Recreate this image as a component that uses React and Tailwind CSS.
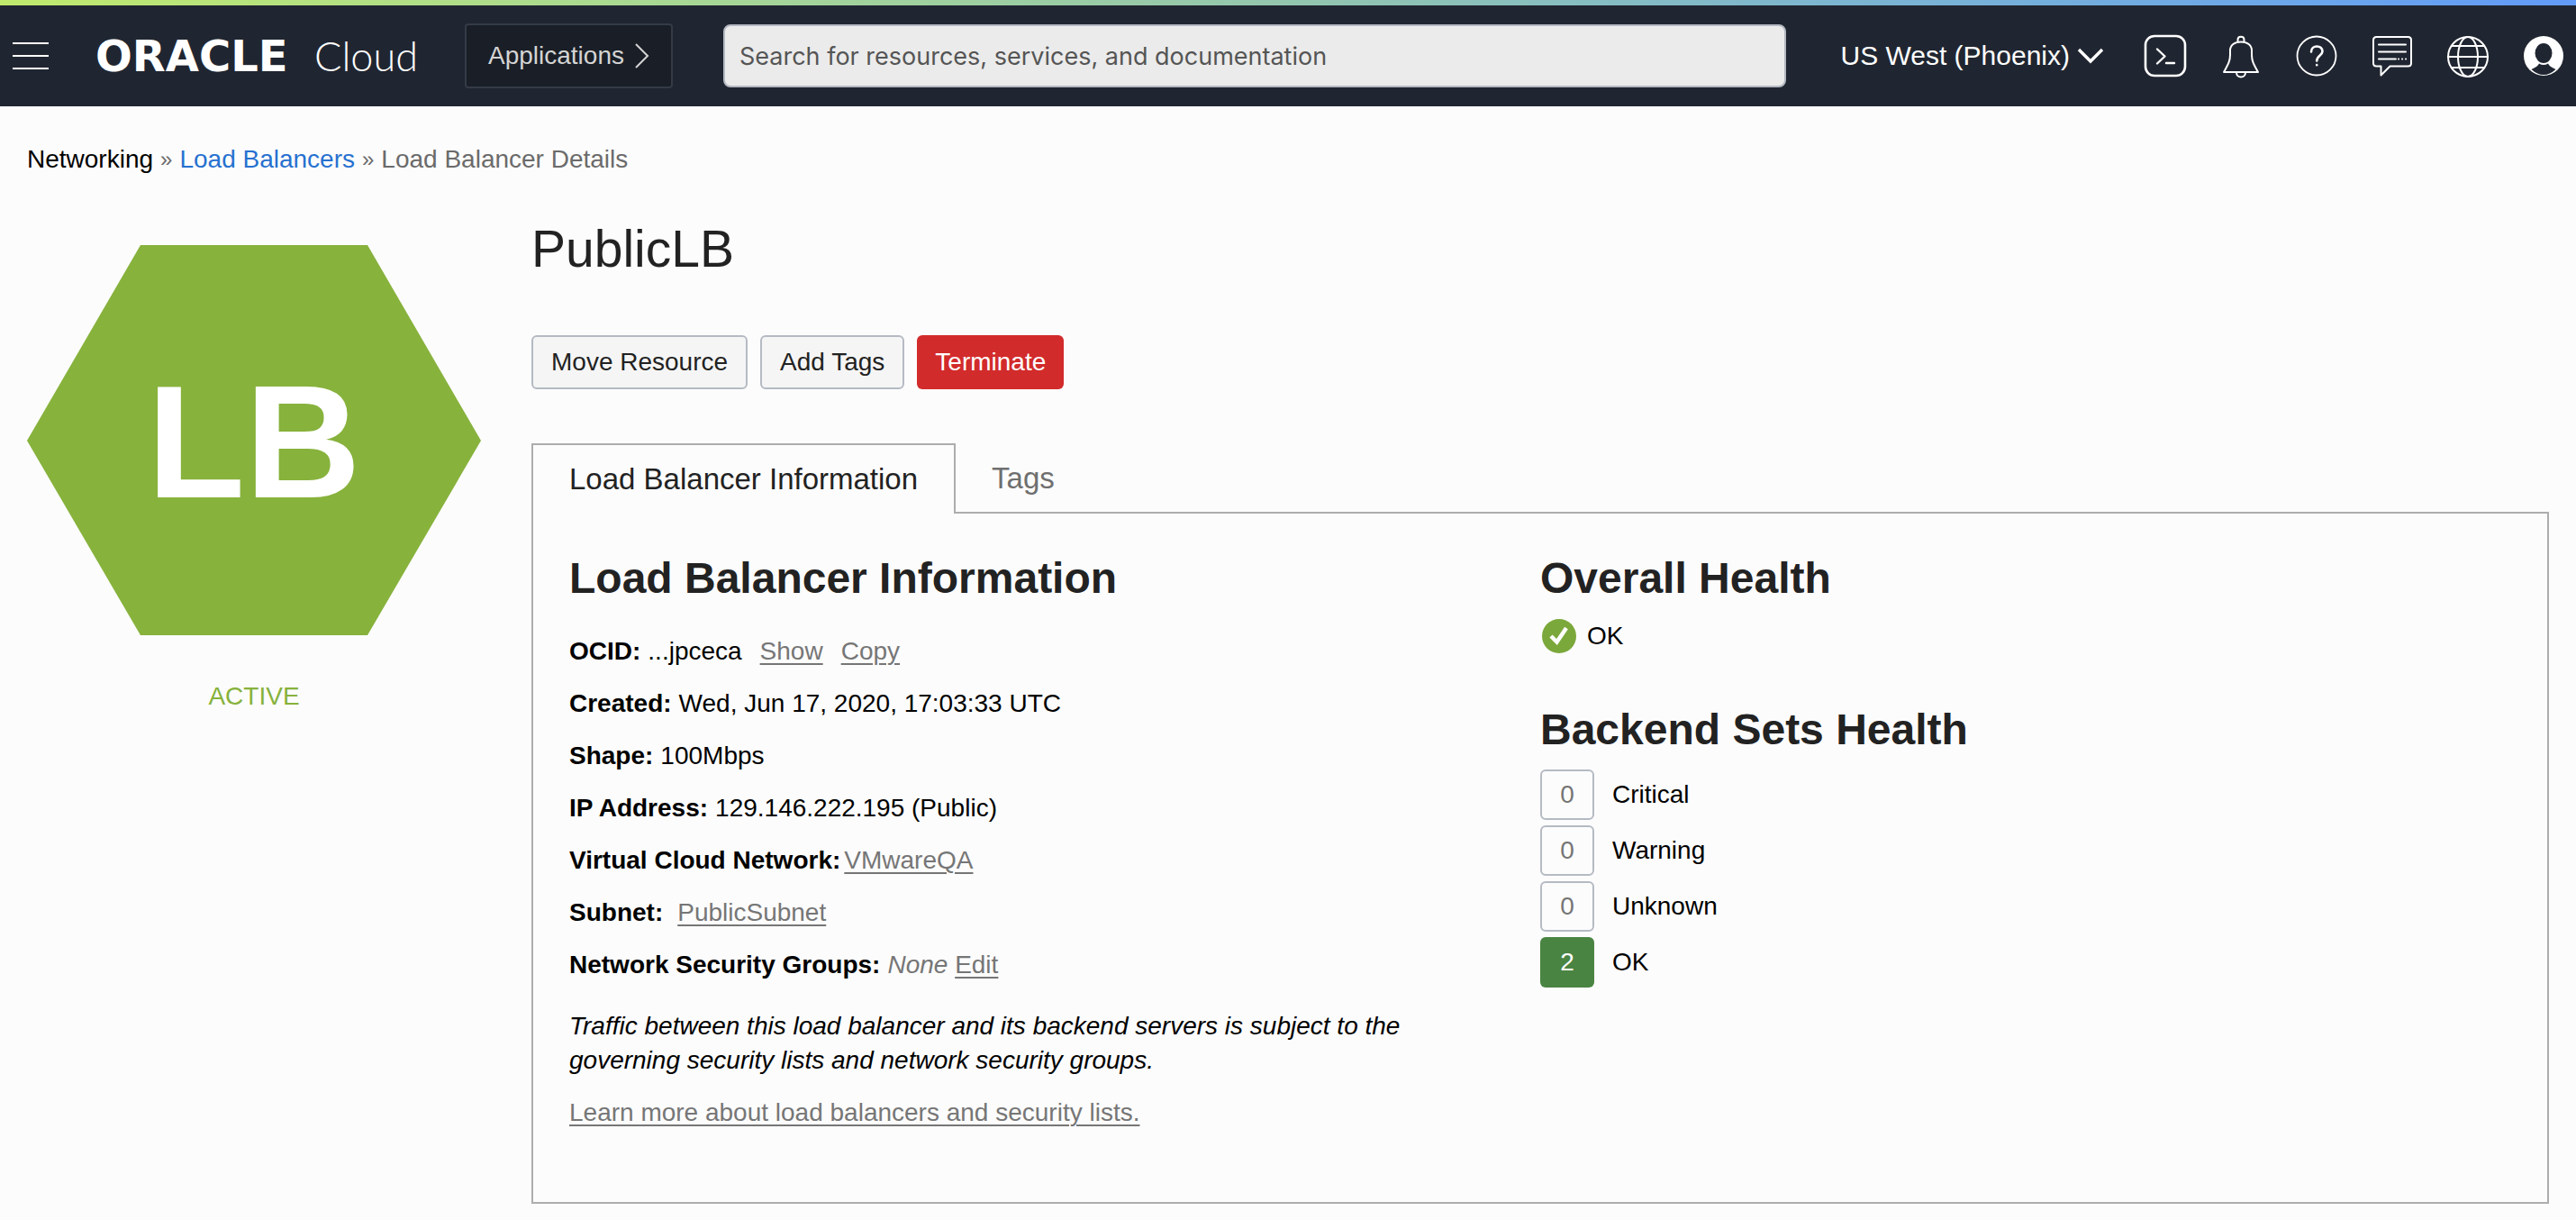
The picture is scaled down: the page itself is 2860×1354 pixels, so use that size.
const FONT = "font-['Liberation_Sans',Arial,sans-serif]";

function IconButton({ label, children }) {
  return (
    <button type="button" aria-label={label} className="flex h-12 w-12 items-center justify-center">
      <svg viewBox="0 0 48 48" className="h-12 w-12 overflow-visible" fill="none" stroke="#fff" strokeWidth="2" strokeLinecap="round" strokeLinejoin="round">
        {children}
      </svg>
    </button>
  );
}

function Header() {
  return (
    <header className="bg-[#202631]">
      <div className="h-1.5 bg-linear-to-r from-[#c0ea6c] via-[#93c6ae] to-[#629bf8]" />
      <div className="flex h-28 items-center pr-3 pl-3.5">
        <button type="button" aria-label="Menu" className="flex w-10 shrink-0 flex-col gap-3">
          <span className="h-0.5 bg-white" />
          <span className="h-0.5 bg-white" />
          <span className="h-0.5 bg-white" />
        </button>
        <a href="#home" className="ml-13 flex w-[358px] shrink-0 items-baseline justify-between text-white">
          <span className="font-['DejaVu_Sans',sans-serif] text-[48px] leading-none font-bold">ORACLE</span>
          <span className="font-[Lato,sans-serif] text-[45px] leading-none font-light">Cloud</span>
        </a>
        <button type="button" className="ml-13 flex h-18 shrink-0 items-center gap-3 rounded border-2 border-[#343b46] bg-[#1a1f27] px-6 text-[28px] text-[#d4d4d4]">
          Applications
          <svg viewBox="0 0 16 28" className="h-7 w-4" fill="none" stroke="#d4d4d4" strokeWidth="2">
            <path d="M1 1L14 14L1 27" />
          </svg>
        </button>
        <input
          type="text"
          aria-label="Search"
          placeholder="Search for resources, services, and documentation"
          className="ml-14 h-[70px] w-0 min-w-0 grow rounded-lg border-2 border-[#b4b9c2] bg-[#ebebeb] px-4 font-[Inter,sans-serif] text-[27px] placeholder:text-[#555]"
        />
        <button type="button" className="ml-15 flex shrink-0 items-center gap-2 text-[30px] text-white">
          US West (Phoenix)
          <svg viewBox="0 0 30 18" className="h-[18px] w-[30px]" fill="none" stroke="#fff" strokeWidth="3.4">
            <path d="M2 2L15 15L28 2" />
          </svg>
        </button>
        <nav aria-label="Tools" className="ml-11 flex shrink-0 gap-9">
          <IconButton label="Cloud Shell">
            <rect x="2" y="2" width="44" height="44" rx="10" strokeWidth="2.6" />
            <path d="M15 16.5L23.5 24.5L15 32.5M25 32H34" strokeWidth="2.4" />
          </IconButton>
          <IconButton label="Announcements">
            <path d="M5 42H43C38.500 34 36 30 36 23V18C36 12 31 8.500 24 8.500C17 8.500 12 12 12 18V23C12 30 9.500 34 5 42ZM20.500 9V6C20.500 1.500 27.500 1.500 27.500 6V9M19 42.500C19 49 29 49 29 42.500" />
          </IconButton>
          <IconButton label="Help">
            <circle cx="24" cy="24" r="21.500" strokeWidth="1.8" />
            <path d="M18 19.500C18 11.500 30.500 11.500 30.500 19C30.500 23.500 24.200 23.500 24.200 29.500M24.200 34V34.300" strokeWidth="2.600" />
          </IconButton>
          <IconButton label="Feedback">
            <path d="M6.500 3H41.500Q45 3 45 6.500V32Q45 35.500 41.500 35.500H21.500L11.500 45.500V35.500H6.500Q3 35.500 3 32V6.500Q3 3 6.500 3ZM9 11.500H39M9 19.500H39M9 27.500H28M31 27.500H31.100M35 27.500H35.100M39 27.500H39.100" />
          </IconButton>
          <IconButton label="Language">
            <circle cx="24" cy="25" r="22" />
            <ellipse cx="24" cy="25" rx="11" ry="22" />
            <path d="M24 3V3.100M2 25H46M6 13H42M6 37H42" />
          </IconButton>
          <IconButton label="Profile">
            <circle cx="24" cy="24" r="22" fill="#fff" stroke="none" />
            <ellipse cx="24" cy="21" rx="9.500" ry="11" fill="#202631" stroke="none" />
            <path d="M19 32.500Q24 35.500 29 32.500Q30 35.500 37.500 39Q31 45 24 45Q17 45 10.500 39Q18 35.500 19 32.500Z" fill="#202631" stroke="none" />
          </IconButton>
        </nav>
      </div>
    </header>
  );
}

const LINK = "text-[#767676] underline decoration-2 underline-offset-4";

function Field({ label, gap = "gap-2", children }) {
  return (
    <div className={`flex items-baseline ${gap}`}>
      <dt className="font-bold">{label}</dt>
      <dd>{children}</dd>
    </div>
  );
}

const BACKENDS = [
  { count: 0, label: "Critical" },
  { count: 0, label: "Warning" },
  { count: 0, label: "Unknown" },
  { count: 2, label: "OK" },
];

export default function App() {
  return (
    <div className={`${FONT} min-h-screen bg-[#fcfcfc] text-[28px] leading-[38px] text-black`}>
      <Header />
      <nav aria-label="Breadcrumb" className="flex gap-2 px-[30px] pt-10 text-[#6b6b6b]">
        <span className="text-black">Networking</span>
        <span className="text-[24px]">»</span>
        <a href="#load-balancers" className="text-[#2771d0]">Load Balancers</a>
        <span className="text-[24px]">»</span>
        <span>Load Balancer Details</span>
      </nav>
      <main className="flex gap-14 px-[30px] pt-12 pb-5">
        <aside className="flex w-[504px] shrink-0 flex-col items-center pt-7">
          <svg viewBox="0 0 504 434" className="w-full" role="img" aria-label="LB">
            <path d="M126 0H378L504 217L378 433H126L0 217Z" fill="#87b23c" />
            <text x="252" y="280" textAnchor="middle" fill="#fff" fontSize="178" fontWeight="bold">LB</text>
          </svg>
          <p className="mt-12 text-[#87b23c]">ACTIVE</p>
        </aside>
        <section className="min-w-0 grow">
          <h1 className="text-[57px] leading-16 text-[#222]">PublicLB</h1>
          <div className="mt-16 flex gap-3.5 text-[#222]">
            <button type="button" className="h-15 rounded-md border-2 border-[#b5bac3] bg-[#f5f5f5] px-5">Move Resource</button>
            <button type="button" className="h-15 rounded-md border-2 border-[#b5bac3] bg-[#f5f5f5] px-5">Add Tags</button>
            <button type="button" className="h-15 rounded-md bg-[#d22b2b] px-5 text-white">Terminate</button>
          </div>
          <div role="tablist" className="relative mt-15 -mb-0.5 flex h-[78px] text-[33px]">
            <button type="button" role="tab" aria-selected="true" className="border-2 border-b-0 border-[#adadad] bg-[#fcfcfc] px-10 text-[#222]">Load Balancer Information</button>
            <button type="button" role="tab" aria-selected="false" className="px-10 text-[#6f6f6f]">Tags</button>
          </div>
          <div role="tabpanel" className="grid grid-cols-[1078px_1fr] border-2 border-[#adadad] px-10 pt-11 pb-20">
            <div>
              <h2 className="text-[48px] leading-14 font-bold text-[#222]">Load Balancer Information</h2>
              <dl className="mt-[34px] flex flex-col gap-5">
                <Field label="OCID:">
                  ...jpceca
                  <a href="#show" className={`${LINK} ml-5`}>Show</a>
                  <a href="#copy" className={`${LINK} ml-5`}>Copy</a>
                </Field>
                <Field label="Created:">Wed, Jun 17, 2020, 17:03:33 UTC</Field>
                <Field label="Shape:">100Mbps</Field>
                <Field label="IP Address:">129.146.222.195 (Public)</Field>
                <Field label="Virtual Cloud Network:" gap="gap-1"><a href="#vcn" className={LINK}>VMwareQA</a></Field>
                <Field label="Subnet:" gap="gap-4"><a href="#subnet" className={LINK}>PublicSubnet</a></Field>
                <Field label="Network Security Groups:">
                  <em className="text-[#767676]">None</em> <a href="#edit" className={LINK}>Edit</a>
                </Field>
              </dl>
              <p className="mt-[30px] w-[960px] italic">
                Traffic between this load balancer and its backend servers is subject to the governing security lists and network security groups.
              </p>
              <p className="mt-5"><a href="#learn" className={LINK}>Learn more about load balancers and security lists.</a></p>
            </div>
            <div>
              <h2 className="text-[48px] leading-14 font-bold text-[#222]">Overall Health</h2>
              <p className="mt-4 flex items-center gap-3">
                <svg viewBox="0 0 40 40" className="h-10 w-10">
                  <circle cx="21" cy="20" r="19" fill="#7ba83a" />
                  <path d="M12 20L18.500 26.500L29 11" fill="none" stroke="#fff" strokeWidth="4.5" />
                </svg>
                OK
              </p>
              <h2 className="mt-14 text-[48px] leading-14 font-bold text-[#222]">Backend Sets Health</h2>
              <ul className="mt-4 flex flex-col gap-1.5">
                {BACKENDS.map((b) => (
                  <li key={b.label} className="flex items-center gap-5">
                    <span className={b.count ? "flex h-14 w-15 items-center justify-center rounded-md bg-[#4a8443] text-white" : "flex h-14 w-15 items-center justify-center rounded-md border-2 border-[#b5bac3] text-[#767676]"}>{b.count}</span>
                    {b.label}
                  </li>
                ))}
              </ul>
            </div>
          </div>
        </section>
      </main>
    </div>
  );
}
